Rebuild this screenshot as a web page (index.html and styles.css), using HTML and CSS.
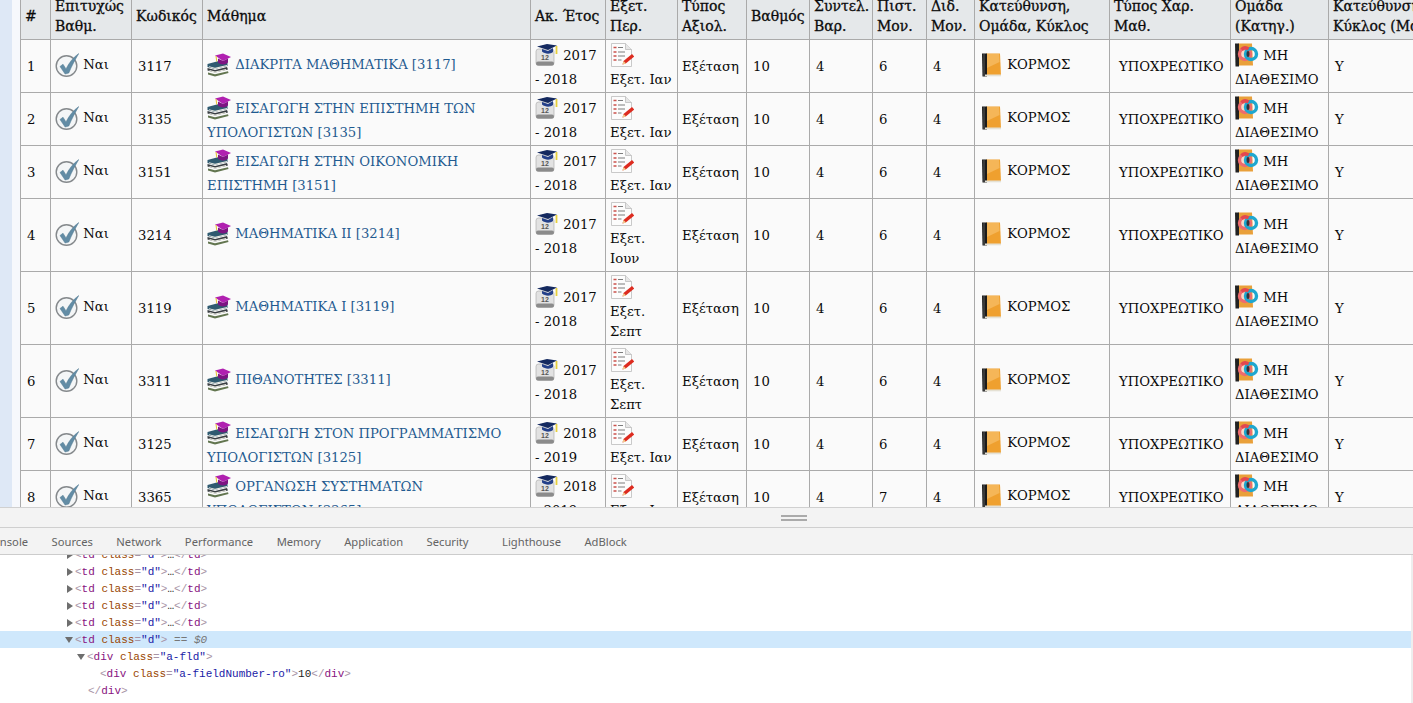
FILE: index.html
```html
<!DOCTYPE html>
<html lang="el">
<head>
<meta charset="utf-8">
<title>Βαθμολογίες</title>
<link rel="stylesheet" href="styles.css">
</head>
<body>
<svg class="defs" aria-hidden="true">
  <symbol id="i-check" viewBox="0 0 24 24">
    <circle cx="11.500" cy="13" r="10.300" fill="#f4f6f7" stroke="#85898c" stroke-width="1.400"/>
    <path d="M5 13.500l3-2.300 3 4.700C14 10 18 4.500 23.800 .5c-3.300 5.500-7.500 13-10 19.500l-3.700 1z" fill="#628ca5" stroke="#4f7890" stroke-width=".5"/>
  </symbol>
  <symbol id="i-books" viewBox="0 0 24 24">
    <path d="M.5 11l13-3.500 7 2v3.500l-13 3-7-2z" fill="#2f5a70"/>
    <path d="M2 13.200l6 1.600 12-2.800v1l-12 2.900-6-1.800z" fill="#e8e8e0"/>
    <path d="M.5 15l7.500 2 12-3 1 2.500-13 3-7.500-2z" fill="#3a3f44"/>
    <path d="M2.500 17l5.500 1.600 11-2.600v1l-11 2.800-5.500-1.800z" fill="#e8e8e0"/>
    <path d="M1 19.500l7 1.800 13-3 .5 1.700-13.500 3.500-7-2z" fill="#62754f"/>
    <path d="M8 2.500l8-2 8 3.500-8 4z" fill="#b020b0"/>
    <path d="M11 5.500l5 2.500 5-2.500v4c-2.500 2.500-7.500 2.500-10 0z" fill="#7d1482"/>
    <path d="M9 3l.8 5.500" stroke="#e8c23a" stroke-width="1.100" fill="none"/>
  </symbol>
  <symbol id="i-year" viewBox="0 0 24 24">
    <rect x="1" y="6" width="18" height="16.500" rx="2.500" fill="#e2e2e2" stroke="#a5a5a5" stroke-width=".6"/>
    <rect x="1" y="18.500" width="18" height="4" rx="2" fill="#8b8b8b"/>
    <text x="6" y="16.500" class="cal-num">12</text>
    <path d="M2 3.500l10-2.500 10 1.500-9 4.500z" fill="#14295f"/>
    <path d="M7 6l6 2 5-3v4c-3 2.500-8 2-11-.5z" fill="#24408a"/>
    <path d="M21.500 3v8" stroke="#e6cf3c" stroke-width="1.800"/>
  </symbol>
  <symbol id="i-paper" viewBox="0 0 24 24">
    <path d="M1.500 .5h14l6 6v17h-20z" fill="#fcfcfc" stroke="#bdbdbd" stroke-width=".8"/>
    <path d="M15.500 .5v6h6" fill="#e6e6e6" stroke="#bdbdbd" stroke-width=".8"/>
    <path d="M3.500 4.500h3M3.500 9h3M3.500 13h3M3.500 17h3" stroke="#c9524c" stroke-width="1.600"/>
    <path d="M8 4.500h5M8 9h7M8 13h7M8 17h3.500" stroke="#7d7d7d" stroke-width="1"/>
    <path d="M12.500 21.500l1-3.500 8.500-7 2.200 2.500-8.500 7z" fill="#dd2b1f"/>
    <path d="M12.500 21.500l1-3.500 2.700 2.500z" fill="#f2c98d"/>
  </symbol>
  <symbol id="i-book" viewBox="0 0 20 24">
    <path d="M5 .5h14l1 22H5z" fill="#efa02f"/>
    <path d="M6 1h12l.5 8-12.500 6z" fill="#f5b658"/>
    <path d="M1 .5h5v23H1.500z" fill="#1b1b1b"/>
    <path d="M3 1v22" stroke="#5b5b5b" stroke-width="1"/>
    <path d="M4 21.500h16v1.800H4z" fill="#e5e1d4"/>
  </symbol>
  <symbol id="i-group" viewBox="0 0 24 24">
    <path d="M3 .5h14l1 22H3z" fill="#e9a03a"/>
    <path d="M0 .5h4v23H.5z" fill="#222"/>
    <circle cx="10" cy="11" r="5.500" fill="#f7d9c8" stroke="#ee6b6e" stroke-width="3.400"/>
    <circle cx="16" cy="11" r="5.500" fill="none" stroke="#1ea7cf" stroke-width="3.400"/>
    <path d="M6.500 6.500a5.500 5.500 0 0 1 7-.5" stroke="#e3474f" stroke-width="3.400" fill="none"/>
    <ellipse cx="13" cy="11" rx="1.500" ry="3" fill="#33343c"/>
  </symbol>
</svg>

<div class="window">
  <div class="page">
    <div class="stripe"></div>
    <div class="gutter"></div>
    <table class="grid">
      <colgroup>
        <col class="c1"><col class="c2"><col class="c3"><col class="c4"><col class="c5"><col class="c6"><col class="c7"><col class="c8"><col class="c9"><col class="c10"><col class="c11"><col class="c12"><col class="c13"><col class="c14"><col class="c15">
      </colgroup>
      <thead>
        <tr>
          <th>#</th><th>Επιτυχώς<br>Βαθμ.</th><th>Κωδικός</th><th>Μάθημα</th><th>Ακ. Έτος</th><th>Εξετ.<br>Περ.</th><th>Τύπος<br>Αξιολ.</th><th>Βαθμός</th><th>Συντελ.<br>Βαρ.</th><th>Πιστ.<br>Μον.</th><th>Διδ.<br>Μον.</th><th>Κατεύθυνση,<br>Ομάδα, Κύκλος</th><th>Τύπος Χαρ.<br>Μαθ.</th><th>Ομάδα<br>(Κατηγ.)</th><th>Κατεύθυνση,<br>Κύκλος (Μάθημα)</th>
        </tr>
      </thead>
      <tbody>
        <tr>
          <td class="n">1</td><td class="s"><svg class="ic"><use href="#i-check"/></svg> Ναι</td><td class="n">3117</td>
          <td class="s"><svg class="ic"><use href="#i-books"/></svg> <a>ΔΙΑΚΡΙΤΑ ΜΑΘΗΜΑΤΙΚΑ [3117]</a></td>
          <td><svg class="ic"><use href="#i-year"/></svg> 2017<br>- 2018</td>
          <td><svg class="ic blk"><use href="#i-paper"/></svg>Εξετ. Ιαν</td>
          <td class="tx">Εξέταση</td><td class="n">10</td><td class="n">4</td><td class="n">6</td><td class="n">4</td>
          <td class="s kat"><svg class="ic bk"><use href="#i-book"/></svg> ΚΟΡΜΟΣ</td><td class="ty">ΥΠΟΧΡΕΩΤΙΚΟ</td>
          <td><svg class="ic"><use href="#i-group"/></svg> ΜΗ<br>ΔΙΑΘΕΣΙΜΟ</td><td class="n">Υ</td>
        </tr>
        <tr>
          <td class="n">2</td><td class="s"><svg class="ic"><use href="#i-check"/></svg> Ναι</td><td class="n">3135</td>
          <td><svg class="ic"><use href="#i-books"/></svg> <a>ΕΙΣΑΓΩΓΗ ΣΤΗΝ ΕΠΙΣΤΗΜΗ ΤΩΝ<br>ΥΠΟΛΟΓΙΣΤΩΝ [3135]</a></td>
          <td><svg class="ic"><use href="#i-year"/></svg> 2017<br>- 2018</td>
          <td><svg class="ic blk"><use href="#i-paper"/></svg>Εξετ. Ιαν</td>
          <td class="tx">Εξέταση</td><td class="n">10</td><td class="n">4</td><td class="n">6</td><td class="n">4</td>
          <td class="s kat"><svg class="ic bk"><use href="#i-book"/></svg> ΚΟΡΜΟΣ</td><td class="ty">ΥΠΟΧΡΕΩΤΙΚΟ</td>
          <td><svg class="ic"><use href="#i-group"/></svg> ΜΗ<br>ΔΙΑΘΕΣΙΜΟ</td><td class="n">Υ</td>
        </tr>
        <tr>
          <td class="n">3</td><td class="s"><svg class="ic"><use href="#i-check"/></svg> Ναι</td><td class="n">3151</td>
          <td><svg class="ic"><use href="#i-books"/></svg> <a>ΕΙΣΑΓΩΓΗ ΣΤΗΝ ΟΙΚΟΝΟΜΙΚΗ<br>ΕΠΙΣΤΗΜΗ [3151]</a></td>
          <td><svg class="ic"><use href="#i-year"/></svg> 2017<br>- 2018</td>
          <td><svg class="ic blk"><use href="#i-paper"/></svg>Εξετ. Ιαν</td>
          <td class="tx">Εξέταση</td><td class="n">10</td><td class="n">4</td><td class="n">6</td><td class="n">4</td>
          <td class="s kat"><svg class="ic bk"><use href="#i-book"/></svg> ΚΟΡΜΟΣ</td><td class="ty">ΥΠΟΧΡΕΩΤΙΚΟ</td>
          <td><svg class="ic"><use href="#i-group"/></svg> ΜΗ<br>ΔΙΑΘΕΣΙΜΟ</td><td class="n">Υ</td>
        </tr>
        <tr>
          <td class="n">4</td><td class="s"><svg class="ic"><use href="#i-check"/></svg> Ναι</td><td class="n">3214</td>
          <td class="s"><svg class="ic"><use href="#i-books"/></svg> <a>ΜΑΘΗΜΑΤΙΚΑ ΙΙ [3214]</a></td>
          <td><svg class="ic"><use href="#i-year"/></svg> 2017<br>- 2018</td>
          <td><svg class="ic blk"><use href="#i-paper"/></svg>Εξετ.<br>Ιουν</td>
          <td class="tx">Εξέταση</td><td class="n">10</td><td class="n">4</td><td class="n">6</td><td class="n">4</td>
          <td class="s kat"><svg class="ic bk"><use href="#i-book"/></svg> ΚΟΡΜΟΣ</td><td class="ty">ΥΠΟΧΡΕΩΤΙΚΟ</td>
          <td><svg class="ic"><use href="#i-group"/></svg> ΜΗ<br>ΔΙΑΘΕΣΙΜΟ</td><td class="n">Υ</td>
        </tr>
        <tr>
          <td class="n">5</td><td class="s"><svg class="ic"><use href="#i-check"/></svg> Ναι</td><td class="n">3119</td>
          <td class="s"><svg class="ic"><use href="#i-books"/></svg> <a>ΜΑΘΗΜΑΤΙΚΑ Ι [3119]</a></td>
          <td><svg class="ic"><use href="#i-year"/></svg> 2017<br>- 2018</td>
          <td><svg class="ic blk"><use href="#i-paper"/></svg>Εξετ.<br>Σεπτ</td>
          <td class="tx">Εξέταση</td><td class="n">10</td><td class="n">4</td><td class="n">6</td><td class="n">4</td>
          <td class="s kat"><svg class="ic bk"><use href="#i-book"/></svg> ΚΟΡΜΟΣ</td><td class="ty">ΥΠΟΧΡΕΩΤΙΚΟ</td>
          <td><svg class="ic"><use href="#i-group"/></svg> ΜΗ<br>ΔΙΑΘΕΣΙΜΟ</td><td class="n">Υ</td>
        </tr>
        <tr>
          <td class="n">6</td><td class="s"><svg class="ic"><use href="#i-check"/></svg> Ναι</td><td class="n">3311</td>
          <td class="s"><svg class="ic"><use href="#i-books"/></svg> <a>ΠΙΘΑΝΟΤΗΤΕΣ [3311]</a></td>
          <td><svg class="ic"><use href="#i-year"/></svg> 2017<br>- 2018</td>
          <td><svg class="ic blk"><use href="#i-paper"/></svg>Εξετ.<br>Σεπτ</td>
          <td class="tx">Εξέταση</td><td class="n">10</td><td class="n">4</td><td class="n">6</td><td class="n">4</td>
          <td class="s kat"><svg class="ic bk"><use href="#i-book"/></svg> ΚΟΡΜΟΣ</td><td class="ty">ΥΠΟΧΡΕΩΤΙΚΟ</td>
          <td><svg class="ic"><use href="#i-group"/></svg> ΜΗ<br>ΔΙΑΘΕΣΙΜΟ</td><td class="n">Υ</td>
        </tr>
        <tr>
          <td class="n">7</td><td class="s"><svg class="ic"><use href="#i-check"/></svg> Ναι</td><td class="n">3125</td>
          <td><svg class="ic"><use href="#i-books"/></svg> <a>ΕΙΣΑΓΩΓΗ ΣΤΟΝ ΠΡΟΓΡΑΜΜΑΤΙΣΜΟ<br>ΥΠΟΛΟΓΙΣΤΩΝ [3125]</a></td>
          <td><svg class="ic"><use href="#i-year"/></svg> 2018<br>- 2019</td>
          <td><svg class="ic blk"><use href="#i-paper"/></svg>Εξετ. Ιαν</td>
          <td class="tx">Εξέταση</td><td class="n">10</td><td class="n">4</td><td class="n">6</td><td class="n">4</td>
          <td class="s kat"><svg class="ic bk"><use href="#i-book"/></svg> ΚΟΡΜΟΣ</td><td class="ty">ΥΠΟΧΡΕΩΤΙΚΟ</td>
          <td><svg class="ic"><use href="#i-group"/></svg> ΜΗ<br>ΔΙΑΘΕΣΙΜΟ</td><td class="n">Υ</td>
        </tr>
        <tr>
          <td class="n">8</td><td class="s"><svg class="ic"><use href="#i-check"/></svg> Ναι</td><td class="n">3365</td>
          <td><svg class="ic"><use href="#i-books"/></svg> <a>ΟΡΓΑΝΩΣΗ ΣΥΣΤΗΜΑΤΩΝ<br>ΥΠΟΛΟΓΙΣΤΩΝ [3365]</a></td>
          <td><svg class="ic"><use href="#i-year"/></svg> 2018<br>- 2019</td>
          <td><svg class="ic blk"><use href="#i-paper"/></svg>Εξετ. Ιαν</td>
          <td class="tx">Εξέταση</td><td class="n">10</td><td class="n">4</td><td class="n">7</td><td class="n">4</td>
          <td class="s kat"><svg class="ic bk"><use href="#i-book"/></svg> ΚΟΡΜΟΣ</td><td class="ty">ΥΠΟΧΡΕΩΤΙΚΟ</td>
          <td><svg class="ic"><use href="#i-group"/></svg> ΜΗ<br>ΔΙΑΘΕΣΙΜΟ</td><td class="n">Υ</td>
        </tr>
      </tbody>
    </table>
  </div>

  <div class="devtools">
    <div class="handle"><span class="grip"></span></div>
    <nav class="tabs">
      <span>Console</span><span>Sources</span><span>Network</span><span>Performance</span><span>Memory</span><span>Application</span><span>Security</span><span class="wide">Lighthouse</span><span>AdBlock</span>
    </nav>
    <div class="dom">
      <div class="ln i1 cut"><i class="tri"></i><b>&lt;</b><u>td</u> <s>class</s><b>=</b><em>"d"</em><b>&gt;</b>…<b>&lt;/</b><u>td</u><b>&gt;</b></div>
      <div class="ln i1"><i class="tri"></i><b>&lt;</b><u>td</u> <s>class</s><b>=</b><em>"d"</em><b>&gt;</b>…<b>&lt;/</b><u>td</u><b>&gt;</b></div>
      <div class="ln i1"><i class="tri"></i><b>&lt;</b><u>td</u> <s>class</s><b>=</b><em>"d"</em><b>&gt;</b>…<b>&lt;/</b><u>td</u><b>&gt;</b></div>
      <div class="ln i1"><i class="tri"></i><b>&lt;</b><u>td</u> <s>class</s><b>=</b><em>"d"</em><b>&gt;</b>…<b>&lt;/</b><u>td</u><b>&gt;</b></div>
      <div class="ln i1"><i class="tri"></i><b>&lt;</b><u>td</u> <s>class</s><b>=</b><em>"d"</em><b>&gt;</b>…<b>&lt;/</b><u>td</u><b>&gt;</b></div>
      <div class="ln i1 sel"><i class="tri open"></i><b>&lt;</b><u>td</u> <s>class</s><b>=</b><em>"d"</em><b>&gt;</b> <span class="eq">== <span class="dollar">$0</span></span></div>
      <div class="ln i2"><i class="tri open"></i><b>&lt;</b><u>div</u> <s>class</s><b>=</b><em>"a-fld"</em><b>&gt;</b></div>
      <div class="ln i3"><b>&lt;</b><u>div</u> <s>class</s><b>=</b><em>"a-fieldNumber-ro"</em><b>&gt;</b>10<b>&lt;/</b><u>div</u><b>&gt;</b></div>
      <div class="ln i4"><b>&lt;/</b><u>div</u><b>&gt;</b></div>
    </div>
  </div>
</div>
</body>
</html>
```
FILE: styles.css
```css
* { box-sizing: border-box; }
html, body { margin: 0; height: 100%; overflow: hidden; background: #fff; }
.defs { display: none; }
.window { display: flex; flex-direction: column; height: 703px; width: 1413px; overflow: hidden; }
.page { display: flex; height: 507px; overflow: hidden; flex: none; background: #fff; }
.stripe { width: 12px; flex: none; background: #dee8f6; }
.gutter { width: 8px; flex: none; background: #f6f8fc; }

.grid {
  flex: none;
  table-layout: fixed;
  width: 1440px;
  height: max-content;
  margin-top: -9px;
  border-collapse: collapse;
  font-family: "DejaVu Serif", "Liberation Serif", serif;
  font-size: 13.2px;
  line-height: 20px;
  color: #0a0a0a;
  background: #fafafa;
}
.c1 { width: 30px; } .c2 { width: 81px; } .c3 { width: 71px; } .c4 { width: 328px; }
.c5 { width: 75px; } .c6 { width: 72px; } .c7 { width: 69px; } .c8 { width: 63px; }
.c9 { width: 63px; } .c10 { width: 54px; } .c11 { width: 48px; } .c12 { width: 135px; }
.c13 { width: 121px; } .c14 { width: 98px; } .c15 { width: 132px; }

.grid th, .grid td { border: 1px solid #aaa; padding: 2px 4px; vertical-align: middle; white-space: nowrap; overflow: hidden; }
.grid th { height: 48px; text-align: left; font-size: 14px; font-weight: 400; background: #e5e8ea; -webkit-text-stroke: .3px #111; }
.grid td.n, .grid td.tx, .grid td.ty { padding-top: 4px; padding-bottom: 2px; }
.grid td.s { padding-top: 1px; padding-bottom: 3px; }
.grid td.n { padding-left: 6px; }
.grid td.kat { padding-left: 6px; }
.grid td.ty { padding-left: 9px; }
.grid a { color: #1f5a90; }
.ic { display: inline-block; width: 24px; height: 24px; margin-top: 1px; margin-bottom: 3px; vertical-align: middle; }
.s .ic { margin-top: 2px; margin-bottom: 2px; }
.ic.blk { display: block; margin: 1px 0 3px; }
.ic.bk { width: 20px; margin-right: 2px; }
.cal-num { font-family: "Liberation Sans", sans-serif; font-size: 7px; font-weight: 700; fill: #555; }

.devtools { flex: 1; display: flex; flex-direction: column; min-height: 0; background: #fff; }
.handle { flex: none; height: 21px; background: #f3f3f3; border-top: 1px solid #d0d0d0; border-bottom: 1px solid #cfcfcf; display: flex; align-items: center; }
.grip { display: block; width: 26px; height: 6px; margin-left: 781px; border-top: 2px solid #aaa; border-bottom: 2px solid #aaa; }
.tabs { flex: none; height: 27px; background: #f3f3f3; border-bottom: 1px solid #cccccc; display: flex; align-items: center; gap: 23.5px; font-family: "Noto Sans", "Open Sans", sans-serif; font-size: 11.2px; color: #636363; overflow: hidden; }
.tabs span:first-child { margin-left: -14px; }
.tabs .wide { margin-left: 10px; }
.dom { flex: 1; overflow: hidden; border-right: 2px solid #eeeeee; font-family: "Liberation Mono", monospace; font-size: 11px; line-height: 18px; color: #222; }
.ln { height: 17px; white-space: pre; position: relative; }
.ln.cut { margin-top: -9px; }
.ln.sel { background: #cfe8fc; }
.i1 { padding-left: 75px; }
.i2 { padding-left: 87px; }
.i3 { padding-left: 100px; }
.i4 { padding-left: 88px; }
.ln b { font-weight: 400; color: #a894a6; }
.ln u { text-decoration: none; color: #881280; }
.ln s { text-decoration: none; color: #994500; }
.ln em { font-style: normal; color: #1a1aa6; }
.eq { color: #777; }
.dollar { font-style: italic; }
.tri { position: absolute; top: 5px; margin-left: -8px; width: 0; height: 0; border-left: 6px solid #6e6e6e; border-top: 4px solid transparent; border-bottom: 4px solid transparent; }
.tri.open { top: 6px; margin-left: -10px; border-top: 6px solid #6e6e6e; border-left: 4px solid transparent; border-right: 4px solid transparent; border-bottom: 0; }
```
